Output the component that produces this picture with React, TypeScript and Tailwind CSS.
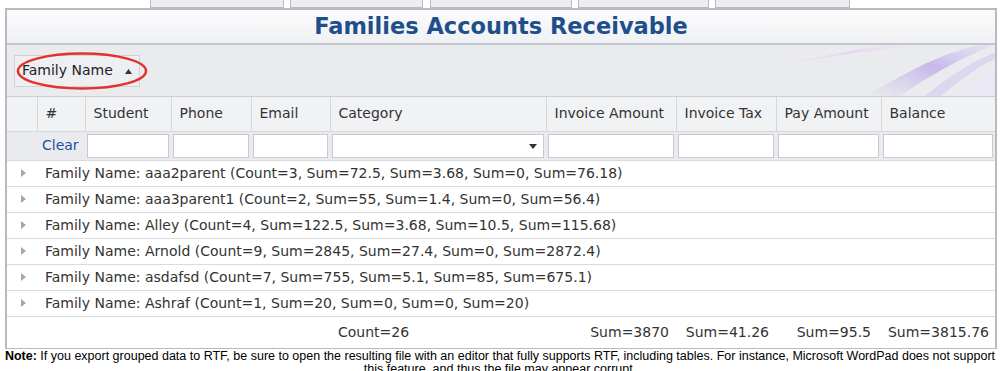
import React from "react"

const groups = [
  "aaa2parent (Count=3, Sum=72.5, Sum=3.68, Sum=0, Sum=76.18)",
  "aaa3parent1 (Count=2, Sum=55, Sum=1.4, Sum=0, Sum=56.4)",
  "Alley (Count=4, Sum=122.5, Sum=3.68, Sum=10.5, Sum=115.68)",
  "Arnold (Count=9, Sum=2845, Sum=27.4, Sum=0, Sum=2872.4)",
  "asdafsd (Count=7, Sum=755, Sum=5.1, Sum=85, Sum=675.1)",
  "Ashraf (Count=1, Sum=20, Sum=0, Sum=0, Sum=20)",
]

const cols = [30, 48, 86, 80, 79, 216, 130, 100, 105, 114]
const headers = ["", "#", "Student", "Phone", "Email", "Category", "Invoice Amount", "Invoice Tax", "Pay Amount", "Balance"]

function Expander() {
  return (
    <svg width="5" height="8" viewBox="0 0 5 8" className="shrink-0">
      <path d="M0 0 L5 4 L0 8 Z" fill="#a3a6aa" />
    </svg>
  )
}

function Swoosh() {
  return (
    <svg className="absolute right-0 top-0 h-full" width="300" height="52" viewBox="0 0 300 52" preserveAspectRatio="none">
      <defs>
        <linearGradient id="sw1" x1="0" y1="1" x2="1" y2="0">
          <stop offset="0" stopColor="#c9b8ec" stopOpacity="0" />
          <stop offset="0.55" stopColor="#bba6e8" stopOpacity="0.75" />
          <stop offset="1" stopColor="#d9cff2" stopOpacity="0.3" />
        </linearGradient>
        <linearGradient id="sw2" x1="0" y1="0" x2="1" y2="0">
          <stop offset="0" stopColor="#f2e2f0" stopOpacity="0" />
          <stop offset="0.6" stopColor="#e7d4ee" stopOpacity="0.9" />
          <stop offset="1" stopColor="#eee6f5" stopOpacity="0.2" />
        </linearGradient>
      </defs>
      <path d="M40 30 C100 18 160 6 230 0 L190 0 C140 8 90 20 40 30 Z" fill="url(#sw2)" />
      <path d="M170 52 C210 30 240 10 285 0 L300 0 C260 15 230 35 205 52 Z" fill="url(#sw1)" />
      <path d="M230 52 C255 32 275 18 300 8 L300 14 C280 24 262 38 246 52 Z" fill="#cbbdee" fillOpacity="0.45" />
      <path d="M265 52 C280 40 290 32 300 28 L300 52 Z" fill="#ebe7f5" fillOpacity="0.6" />
    </svg>
  )
}

export default function App() {
  return (
    <div className="w-[1000px] h-[371px] overflow-hidden bg-white text-[#333]" style={{ fontFamily: '"DejaVu Sans", Verdana, sans-serif' }}>
      {/* Tabs cut at top */}
      <div className="relative h-[8px] overflow-hidden">
        <div className="absolute bottom-0 left-[150px] w-[134px] h-[20px] border border-[#b8bbc2] bg-[#eceef1]" />
        <div className="absolute bottom-0 left-[290px] w-[133px] h-[20px] border border-[#b8bbc2] bg-[#eceef1]" />
        <div className="absolute bottom-0 left-[430px] w-[142px] h-[20px] border border-[#b8bbc2] bg-[#eceef1]" />
        <div className="absolute bottom-0 left-[578px] w-[131px] h-[20px] border border-[#b8bbc2] bg-[#eceef1]" />
        <div className="absolute bottom-0 left-[715px] w-[135px] h-[20px] border border-[#b8bbc2] bg-[#eceef1]" />
      </div>

      <div className="ml-[5px] w-[992px] border-2 border-[#b7bac1] border-b">
        {/* Title */}
        <div className="h-[35px] flex items-center justify-center bg-gradient-to-b from-[#fbfbfc] to-[#f0f1f4] border-b-2 border-[#c2c5cc]">
          <span className="text-[22.5px] font-bold text-[#1f4f8b]">Families Accounts Receivable</span>
        </div>

        {/* Group panel */}
        <div className="relative h-[52px] bg-[#e9ebef] flex items-center pl-[7px] border-b border-[#c9ccd2] overflow-hidden">
          <Swoosh />
          <div className="relative h-[32px] w-[126px] flex items-center pl-[7px] border border-[#cfd2d7] bg-[#edeff2] text-[14px] text-[#222]">
            Family Name
            <svg width="7" height="5" viewBox="0 0 7 5" className="ml-[12px] mt-[1px]">
              <path d="M0 5 L3.5 0 L7 5 Z" fill="#333" />
            </svg>
          </div>
          <svg className="absolute left-[8px] top-[6px]" width="134" height="40" viewBox="0 0 134 40">
            <ellipse cx="67" cy="20" rx="64" ry="17.5" fill="none" stroke="#e5312b" strokeWidth="2.5" />
          </svg>
        </div>

        <table className="table-fixed border-collapse w-[988px] text-[14px]">
          <colgroup>
            {cols.map((w, i) => (
              <col key={i} style={{ width: w }} />
            ))}
          </colgroup>
          <thead>
            <tr className="h-[34px] bg-[#f1f2f4]">
              {headers.map((h, i) => (
                <th key={i} className={`font-normal text-left pl-[8px] whitespace-nowrap border-[#d4d7dc] border-b ${i > 0 ? "border-l" : ""}`}>
                  {h}
                </th>
              ))}
            </tr>
            <tr className="h-[29px] bg-[#e9ebee]">
              <td />
              <td className="text-[#1f4f9c] pl-[5px]">Clear</td>
              {cols.slice(2).map((_, i) => (
                <td key={i} className="px-[2px] py-0">
                  <div className="relative h-[24px] bg-white border border-[#c7cace]">
                    {i === 3 && (
                      <svg width="8" height="5" viewBox="0 0 8 5" className="absolute right-[6px] top-[9px]">
                        <path d="M0 0 L8 0 L4 5 Z" fill="#333" />
                      </svg>
                    )}
                  </div>
                </td>
              ))}
            </tr>
          </thead>
          <tbody>
            {groups.map((g) => (
              <tr key={g} className="h-[26px] border-t border-[#d9dbdf]">
                <td colSpan={10} className="p-0">
                  <div className="flex items-center pl-[14px] gap-[19px] text-[#333]">
                    <Expander />
                    <span>Family Name: {g}</span>
                  </div>
                </td>
              </tr>
            ))}
            <tr className="h-[32px] border-t border-[#d9dbdf]">
              <td colSpan={5} />
              <td className="pl-[8px]">Count=26</td>
              <td className="text-right pr-[7px]">Sum=3870</td>
              <td className="text-right pr-[7px]">Sum=41.26</td>
              <td className="text-right pr-[10px]">Sum=95.5</td>
              <td className="text-right pr-[6px]">Sum=3815.76</td>
            </tr>
          </tbody>
        </table>
      </div>

      <p className="text-center text-[12.5px] leading-[13px] text-black mt-[1px] px-[4px]" style={{ fontFamily: '"Liberation Sans", Arial, sans-serif' }}>
        <b>Note:</b> If you export grouped data to RTF, be sure to open the resulting file with an editor that fully supports RTF, including tables. For instance, Microsoft WordPad does not support this feature, and thus the file may appear corrupt.
      </p>
    </div>
  )
}
